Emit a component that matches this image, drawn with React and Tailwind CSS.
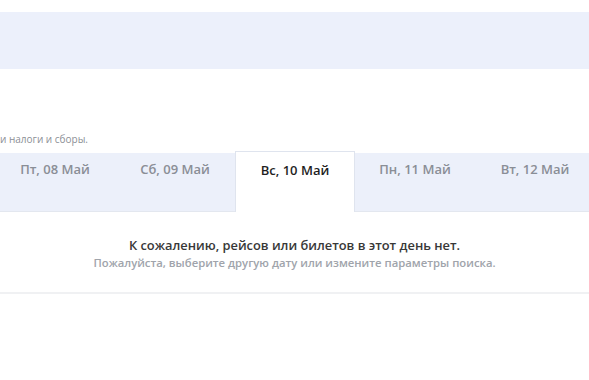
export default function App() {
  const days = [
    { label: 'Пт, 08 Май' },
    { label: 'Сб, 09 Май' },
    { label: 'Вс, 10 Май', active: true },
    { label: 'Пн, 11 Май' },
    { label: 'Вт, 12 Май' },
  ];

  return (
    <div className="w-[589px] h-[380px] overflow-hidden bg-white" style={{ fontFamily: '"Open Sans", sans-serif' }}>
      {/* search bar strip */}
      <div className="mt-[12px] h-[57px] bg-[#ecf0fb]" />

      {/* note */}
      <div className="mt-[62px] text-[10px] leading-[16px] text-[#8c8f96]">
        и налоги и сборы.
      </div>

      {/* date tabs */}
      <div className="mt-[4px] -ml-[5px] flex items-end h-[61px]">
        {days.map((d, i) => (
          <div
            key={i}
            className={
              d.active
                ? 'w-[120px] shrink-0 h-[61px] bg-white border border-b-0 border-[#dfe4ee] pt-[9px] text-center text-[13px] font-semibold text-[#1f1f1f]'
                : 'w-[120px] shrink-0 h-[59px] bg-[#ecf0fa] border-b border-[#e3e7ef] pt-[7px] text-center text-[13px] font-semibold text-[#8a8e96]'
            }
          >
            {d.label}
          </div>
        ))}
      </div>

      {/* empty state */}
      <div className="pt-[24px] pb-[21px] text-center border-b-2 border-[#f0f1f3]">
        <div className="text-[12.85px] leading-[18px] font-semibold text-[#383838]">
          К сожалению, рейсов или билетов в этот день нет.
        </div>
        <div className="text-[11.3px] leading-[17px] font-semibold text-[#a0a4ab]">
          Пожалуйста, выберите другую дату или измените параметры поиска.
        </div>
      </div>
    </div>
  );
}
